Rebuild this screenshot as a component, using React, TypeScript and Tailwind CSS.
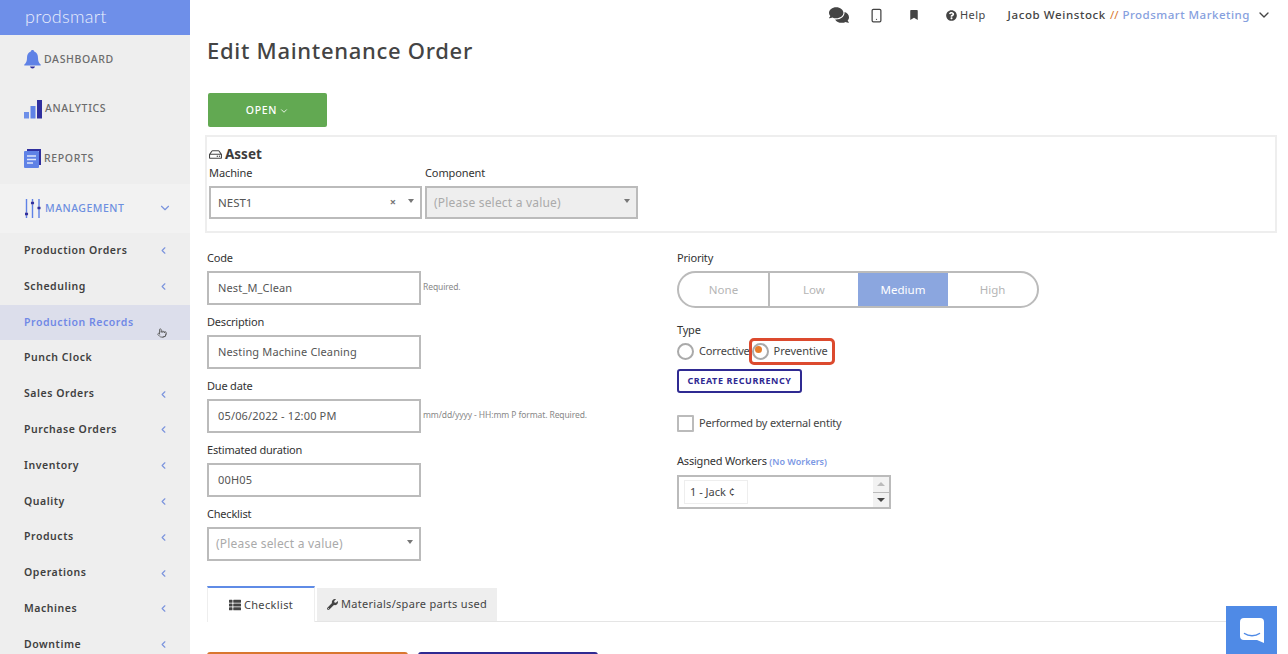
import { ChevronDown, ChevronLeft, Smartphone, Pointer } from 'lucide-react';
import { FaBookmark, FaComments, FaRegHdd, FaThList, FaQuestionCircle, FaWrench } from 'react-icons/fa';

const subItems: { label: string; arrow: boolean; active?: boolean }[] = [
  { label: 'Production Orders', arrow: true },
  { label: 'Scheduling', arrow: true },
  { label: 'Production Records', arrow: false, active: true },
  { label: 'Punch Clock', arrow: false },
  { label: 'Sales Orders', arrow: true },
  { label: 'Purchase Orders', arrow: true },
  { label: 'Inventory', arrow: true },
  { label: 'Quality', arrow: true },
  { label: 'Products', arrow: true },
  { label: 'Operations', arrow: true },
  { label: 'Machines', arrow: true },
  { label: 'Downtime', arrow: true },
];

function BellIcon() {
  return (
    <svg width="17" height="19" viewBox="0 0 17 19">
      <path d="M8.5 0c1 0 1.6.7 1.7 1.6C13 2.6 14 5 14 8c0 3 .8 5 2.6 6.6.4.4.2 1-.4 1H.8c-.6 0-.8-.6-.4-1C2.200 13 3 11 3 8c0-3 1-5.400 3.800-6.400C6.900.7 7.500 0 8.500 0z" fill="#5f82e6" />
      <path d="M6 16.500h5c-.3 1.200-1.300 2-2.500 2S6.300 17.700 6 16.500z" fill="#2f2f9e" />
    </svg>
  );
}

function BarsIcon() {
  return (
    <svg width="18" height="19" viewBox="0 0 18 19">
      <rect x="0" y="12" width="5" height="6.500" fill="#6d8fe8" />
      <rect x="6.500" y="6" width="5" height="12.500" fill="#5f82e6" />
      <rect x="13" y="0" width="5" height="18.500" fill="#2f2f9e" />
    </svg>
  );
}

function ReportIcon() {
  return (
    <svg width="17" height="19" viewBox="0 0 17 19">
      <path d="M3 0h14v16h-2V2H3z" fill="#2f2f9e" />
      <rect x="0" y="2" width="15" height="17" rx="1" fill="#5f82e6" />
      <path d="M3 7h9M3 10.500h9M3 14h6" stroke="#dfe6fa" strokeWidth="1.300" />
    </svg>
  );
}

function SlidersIcon() {
  return (
    <svg width="16" height="19" viewBox="0 0 16 19">
      <path d="M1.500 0v13M1.500 17v2M7.500 0v2M7.500 6v13M14 0v7M14 11v8" stroke="#5f82e6" strokeWidth="1.400" />
      <circle cx="1.500" cy="15" r="1.700" fill="#2f2f9e" />
      <circle cx="7.500" cy="4" r="1.700" fill="#2f2f9e" />
      <circle cx="14" cy="9" r="1.700" fill="#2f2f9e" />
    </svg>
  );
}

function Caret() {
  return <span className="w-0 h-0 mb-[4px] border-x-[3px] border-x-transparent border-t-[4px] border-t-[#777]" />;
}

function TextField({ label, value, hint }: { label: string; value: string; hint?: string }) {
  return (
    <div className="h-[64px]">
      <div className="h-[17px] text-[11px] leading-[15px] tracking-[-0.2px] text-[#333]">{label}</div>
      <div className="flex items-center mt-[-1px]">
        <div className="w-[214px] h-[34px] mt-[5px] border-2 border-[#bbbbbb] pl-[9px] pt-[1px] flex items-center text-[11px] tracking-[0.15px] text-[#555]">{value}</div>
        {hint && <span className="ml-[2px] mt-[4px] text-[8.500px] text-[#888] tracking-[-0.1px]">{hint}</span>}
      </div>
    </div>
  );
}

export default function App() {
  return (
    <div className="flex h-[654px] w-[1288px] overflow-hidden bg-white text-[#333] font-['Noto_Sans',sans-serif]">
      <aside className="w-[190px] shrink-0 bg-[#eeeeee] flex flex-col">
        <div className="h-[35px] shrink-0 bg-[#6e8fe9] pl-[25px] pb-[3px] flex items-center font-['Lato',sans-serif] text-[18px] font-light text-[#e9eefc] tracking-[0.3px]">prodsmart</div>
        {[
          { label: 'DASHBOARD', icon: <BellIcon /> },
          { label: 'ANALYTICS', icon: <BarsIcon /> },
          { label: 'REPORTS', icon: <ReportIcon /> },
        ].map((item) => (
          <div key={item.label} className="h-[49.500px] shrink-0 pl-[24px] flex items-center gap-[3px] text-[10.500px] font-medium tracking-[0.65px] text-[#6b6b6b]">
            {item.icon}
            <span>{item.label}</span>
          </div>
        ))}
        <div className="h-[49.500px] shrink-0 bg-[#f2f2f2] pl-[25px] pr-[18px] flex items-center gap-[4px] text-[10.500px] font-medium tracking-[0.5px] text-[#6d8fe0]">
          <SlidersIcon />
          <span className="flex-1 pt-[2px]">MANAGEMENT</span>
          <ChevronDown size={14} strokeWidth={2} className="text-[#7a93dd]" />
        </div>
        {subItems.map((item) => (
          <div key={item.label} className={`relative h-[35.800px] shrink-0 pl-[24px] pr-[21px] flex items-center justify-between text-[10.500px] font-semibold tracking-[0.55px] ${item.active ? 'bg-[#dcdeeb] text-[#7189e6]' : 'text-[#3f3f3f]'}`}>
            <span>{item.label}</span>
            {item.arrow && <ChevronLeft size={11} strokeWidth={2.500} className="text-[#7a93dd]" />}
            {item.active && <Pointer size={10} className="absolute left-[157px] top-[23px] text-[#555]" />}
          </div>
        ))}
      </aside>

      <main className="relative flex-1 min-w-0">
        <header className="h-[30px] pl-[639px] flex items-center text-[#444]">
          <FaComments size={20} className="text-[#444]" />
          <Smartphone size={15} strokeWidth={2} className="ml-[20px]" />
          <FaBookmark size={10} className="ml-[25px]" />
          <FaQuestionCircle size={11} className="ml-[27px]" />
          <span className="ml-[3px] text-[11px] tracking-[0.4px]">Help</span>
          <span className="ml-[22px] text-[11.500px] font-medium tracking-[0.6px]">Jacob Weinstock</span>
          <span className="ml-[4px] text-[11.500px] text-[#d9772f]">//</span>
          <span className="ml-[4px] text-[11.500px] font-medium tracking-[0.5px] text-[#86a0de]">Prodsmart Marketing</span>
          <ChevronDown size={16} strokeWidth={2} className="ml-[6px]" />
        </header>

        <h1 className="pl-[17px] mt-[3px] h-[34px] text-[22px] leading-[34px] font-medium text-[#444] tracking-[0.7px]">Edit Maintenance Order</h1>

        <div className="pl-[18px] mt-[26px]">
          <button className="w-[119px] h-[34px] pt-[2px] rounded-[2px] bg-[#62a952] text-white text-[10.500px] font-medium tracking-[0.7px] flex items-center justify-center gap-[2px]">
            OPEN <ChevronDown size={10} strokeWidth={2} />
          </button>
        </div>

        <section className="ml-[15px] mr-[11px] mt-[8px] h-[98px] border-2 border-[#eeeeee] pl-[2px] pt-[8px]">
          <div className="flex items-center gap-[3px] h-[18px]">
            <FaRegHdd size={13} className="text-[#444]" />
            <span className="text-[13.500px] font-bold text-[#3c3c3c]">Asset</span>
          </div>
          <div className="flex gap-[3px] mt-[1px]">
            <div>
              <div className="h-[17px] text-[11px] leading-[17px] tracking-[-0.1px] text-[#333]">Machine</div>
              <div className="w-[213px] h-[33px] mt-[5px] border-2 border-[#bbbbbb] pl-[7px] pr-[6px] flex items-center text-[11.500px] text-[#555]">
                <span className="flex-1">NEST1</span>
                <span className="text-[11px] font-bold text-[#777] mr-[12px]">×</span>
                <Caret />
              </div>
            </div>
            <div>
              <div className="h-[17px] text-[11px] leading-[17px] tracking-[-0.1px] text-[#333]">Component</div>
              <div className="w-[213px] h-[33px] mt-[5px] border-2 border-[#bbbbbb] bg-[#eeeeee] pl-[7px] pr-[6px] flex items-center text-[12px] text-[#aaaaaa] tracking-[0.2px]">
                <span className="flex-1">(Please select a value)</span>
                <Caret />
              </div>
            </div>
          </div>
        </section>

        <div className="flex mt-[17px] pl-[17px]">
          <div className="w-[470px] shrink-0">
            <TextField label="Code" value="Nest_M_Clean" hint="Required." />
            <TextField label="Description" value="Nesting Machine Cleaning" />
            <TextField label="Due date" value="05/06/2022 - 12:00 PM" hint="mm/dd/yyyy - HH:mm P format. Required." />
            <TextField label="Estimated duration" value="00H05" />
            <div className="h-[17px] text-[11px] leading-[15px] tracking-[-0.2px] text-[#333]">Checklist</div>
            <div className="w-[214px] h-[34px] mt-[4px] border-2 border-[#bbbbbb] pl-[7px] pr-[6px] flex items-center text-[12px] text-[#aaaaaa] tracking-[0.2px]">
              <span className="flex-1">(Please select a value)</span>
              <Caret />
            </div>
          </div>

          <div className="flex-1">
            <div className="h-[17px] text-[11px] leading-[15px] tracking-[-0.2px] text-[#333]">Priority</div>
            <div className="w-[362px] h-[37px] mt-[4px] border-2 border-[#bbbbbb] rounded-full overflow-hidden flex text-[11.500px] text-[#b5b5b5]">
              <div className="w-[91px] border-r-2 border-[#bbbbbb] flex items-center justify-center">None</div>
              <div className="w-[88px] flex items-center justify-center">Low</div>
              <div className="w-[90px] bg-[#8ba6df] text-white flex items-center justify-center">Medium</div>
              <div className="flex-1 flex items-center justify-center">High</div>
            </div>
            <div className="h-[17px] mt-[14px] text-[11px] leading-[15px] tracking-[-0.2px] text-[#333]">Type</div>
            <div className="flex items-center h-[24px] text-[11px] text-[#444]">
              <span className="w-[17px] h-[17px] rounded-full border-2 border-[#aaaaaa]" />
              <span className="ml-[5px] tracking-[-0.2px]">Corrective</span>
              <span className="flex items-center h-[27px] ml-[-1px] pr-[4px] gap-[5px] border-[3px] border-[#dc4a2e] rounded-[5px]">
                <span className="relative w-[17px] h-[17px] rounded-full border-2 border-[#aaaaaa]">
                  <span className="absolute left-[1px] top-[1px] w-[7px] h-[7px] rounded-full bg-[#e77d2a]" />
                </span>
                <span>Preventive</span>
              </span>
            </div>
            <button className="block w-[125px] h-[24px] mt-[6px] border-2 border-[#2f2a92] rounded-[3px] text-[9px] font-bold tracking-[0.6px] text-[#2f2a92]">CREATE RECURRENCY</button>
            <div className="flex items-center mt-[22px] h-[17px] text-[11px] tracking-[-0.2px] text-[#444]">
              <span className="w-[17px] h-[17px] border-2 border-[#bbbbbb] rounded-[1px]" />
              <span className="ml-[5px]">Performed by external entity</span>
            </div>
            <div className="mt-[20px] h-[17px] text-[11px] leading-[17px] tracking-[-0.2px] text-[#333]">
              Assigned Workers <span className="text-[9px] font-semibold tracking-normal text-[#7c98e4]">(No Workers)</span>
            </div>
            <div className="w-[214px] h-[34px] mt-[6px] border-2 border-[#bbbbbb] pl-[5px] flex items-center">
              <div className="w-[64px] h-[24px] border border-[#eeeeee] pl-[5px] flex items-center overflow-hidden whitespace-nowrap text-[11px] text-[#444]">1 - Jack ¢</div>
              <div className="ml-auto w-[16px] h-full bg-[#f2f2f2] flex flex-col items-center">
                <div className="flex-1 w-full flex items-center justify-center border-b border-[#bbbbbb]">
                  <span className="w-0 h-0 border-x-[4px] border-x-transparent border-b-[4px] border-b-[#bbbbbb]" />
                </div>
                <div className="flex-1 w-full flex items-center justify-center">
                  <span className="w-0 h-0 border-x-[4px] border-x-transparent border-t-[4px] border-t-[#444]" />
                </div>
              </div>
            </div>
          </div>
        </div>

        <div className="ml-[17px] mr-[11px] mt-[25px] h-[36px] flex items-end gap-[2px] border-b border-[#e5e5e5]">
          <div className="w-[108px] h-[36px] mb-[-1px] bg-white border-t-2 border-t-[#5f8be6] border-x border-x-[#eeeeee] flex items-center justify-center gap-[3px] text-[11px] tracking-[0.35px] text-[#444]">
            <FaThList size={12} /> Checklist
          </div>
          <div className="w-[180px] h-[33px] bg-[#eeeeee] flex items-center justify-center gap-[3px] text-[11px] tracking-[0.3px] text-[#444]">
            <FaWrench size={11} /> Materials/spare parts used
          </div>
        </div>

        <div className="flex ml-[17px] mt-[30px] gap-[10px]">
          <div className="w-[201px] h-[20px] rounded-[3px] bg-[#d9772f]" />
          <div className="w-[180px] h-[20px] rounded-[3px] bg-[#2f2a92]" />
        </div>

        <div className="absolute left-[1036px] top-[606px] w-[51px] h-[48px] bg-[#4f8ae6] flex items-center justify-center">
          <svg width="24" height="25" viewBox="0 0 24 25">
            <path d="M4 0h16a4 4 0 0 1 4 4v21l-7-3H4a4 4 0 0 1-4-4V4a4 4 0 0 1 4-4z" fill="#fff" />
            <path d="M4.500 15.500c4 3 11 3 15 0" stroke="#4f8ae6" strokeWidth="1.500" fill="none" strokeLinecap="round" />
          </svg>
        </div>
      </main>
    </div>
  );
}
